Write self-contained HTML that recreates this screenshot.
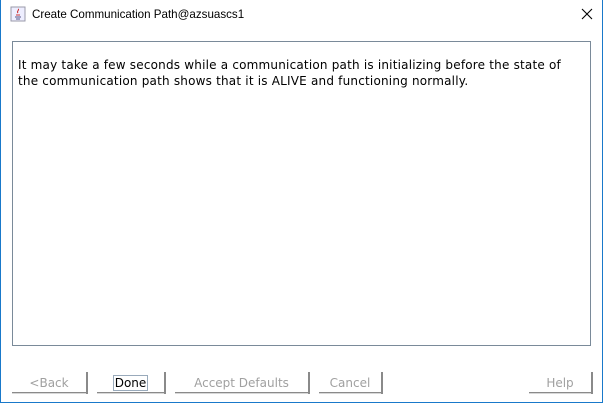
<!DOCTYPE html>
<html><head><style>
html,body{margin:0;padding:0;background:#fff;width:604px;height:407px;overflow:hidden;position:relative;font-family:"DejaVu Sans","Liberation Sans",sans-serif}
.win{position:absolute;left:0;top:0;width:601px;height:402px;border:1px solid #1979ca;border-top:none}
.title{position:absolute;left:32px;top:8px;font-family:"Liberation Sans",sans-serif;font-size:11.6px;color:#000}
.x{position:absolute;left:581px;top:8px;width:12px;height:12px}
.panel{position:absolute;left:12px;top:41px;width:577px;height:303px;border:1px solid #7a8a99}
.txt{position:absolute;left:18px;top:57px;font-size:12px;letter-spacing:0.2px;line-height:16px;color:#000;white-space:nowrap}
.b{position:absolute;top:372px;height:22px;border-right:2px solid #8a8a8a;border-bottom:2px solid #8a8a8a;box-shadow:inset 1px 0 0 #fff;font-size:12px;color:#a0a0a0;text-align:center;line-height:22px;box-sizing:border-box}
.b::before{content:"";position:absolute;left:0;bottom:-2px;width:100%;height:1px;background:#d8d8d8}
</style></head><body>
<div class="win"></div>
<svg style="position:absolute;left:10px;top:6px" width="16" height="16" viewBox="0 0 16 16"><rect x="1" y="1" width="14" height="14" fill="#eef" stroke="#99a"/><path d="M8 3c2 1-2 2 0 4M6 9h4" stroke="#c33" fill="none"/><path d="M5 11h6M6 13h4" stroke="#558"/></svg>
<div class="title">Create Communication Path@azsuascs1</div>
<svg class="x" viewBox="0 0 12 12"><path d="M1 1L11 11M11 1L1 11" stroke="#000" stroke-width="1.1"/></svg>
<div class="panel"></div>
<div class="txt">It may take a few seconds while a communication path is initializing before the state of<br>the communication path shows that it is ALIVE and functioning normally.</div>
<div class="b" style="left:12px;width:76px">&lt;Back</div>
<div class="b" style="left:97px;width:69px;color:#000"><span style="border:1px solid #9ab;padding:0 1px;line-height:14px;display:inline-block">Done</span></div>
<div class="b" style="left:175px;width:135px">Accept Defaults</div>
<div class="b" style="left:319px;width:64px">Cancel</div>
<div class="b" style="left:529px;width:64px">Help</div>
</body></html>
